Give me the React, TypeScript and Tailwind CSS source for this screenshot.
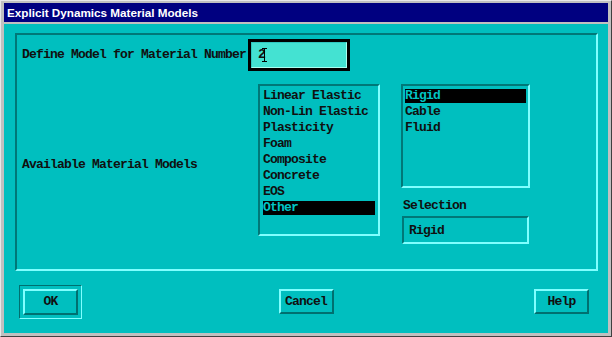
import React from "react";

const mono = { fontFamily: '"Liberation Mono", "DejaVu Sans Mono", monospace' };

function ListBox({ items, selected, className }: { items: string[]; selected: string; className: string }) {
  return (
    <div
      className={`border-2 border-t-[#007878] border-l-[#007878] border-r-[#80ffff] border-b-[#80ffff] flex flex-col gap-[2px] ${className}`}
    >
      {items.map((it) => (
        <div
          key={it}
          className={`h-[14px] leading-[14px] whitespace-pre ${it === selected ? "bg-black text-[#00c4c4]" : "text-[#101010]"}`}
        >
          {it}
        </div>
      ))}
    </div>
  );
}

function Button({ label }: { label: string }) {
  return (
    <div className="w-[55px] h-[25px] border-2 border-t-[#80ffff] border-l-[#80ffff] border-r-[#007070] border-b-[#007070] flex items-center justify-center text-[#101010]">
      {label}
    </div>
  );
}

export default function App() {
  return (
    <div
      className="w-[612px] h-[337px] bg-[#c0c0c0] border border-t-[#e8e8e8] border-l-[#e8e8e8] border-r-[#404040] border-b-[#404040] pt-[2px] pl-[3px] pr-[3px] pb-[3px] flex flex-col"
    >
      <div
        className="h-[19px] mb-[2px] bg-[#000080] text-white font-bold text-[11.7px] pl-[3px] flex items-center"
        style={{ fontFamily: '"Liberation Sans", Arial, sans-serif' }}
      >
        Explicit Dynamics Material Models
      </div>
      <div className="flex-1 bg-[#00bfbf] flex flex-col pt-[9px] pl-[11px] pr-[10px] font-bold text-[13px] tracking-[-0.8px] text-[#101010]" style={mono}>
        <div className="h-[238px] border-2 border-t-[#007878] border-l-[#007878] border-r-[#80ffff] border-b-[#80ffff] flex flex-col">
          <div className="mt-[4px] flex items-center h-[32px] pl-[5px]">
            <div className="w-[226px] whitespace-pre leading-[14px]">Define Model for Material Number</div>
            <div className="w-[102px] h-[32px] border-[3px] border-black">
              <div className="w-full h-full bg-[#44e2d2] border border-t-[#30c8c0] border-l-[#30c8c0] border-r-[#a8fff0] border-b-[#a8fff0] flex items-center pl-[6px]">
                <span className="relative inline-block h-[14px] leading-[14px]">
                  2
                  <span className="absolute left-[6px] top-[0px] w-[1px] h-[14px] bg-black" />
                  <span className="absolute left-[4px] top-[0px] w-[5px] h-[1px] bg-black" />
                  <span className="absolute left-[4px] top-[13px] w-[5px] h-[1px] bg-black" />
                </span>
              </div>
            </div>
          </div>
          <div className="mt-[13px] flex">
            <div className="w-[241px] pl-[5px] pt-[74px] leading-[14px] whitespace-pre">Available Material Models</div>
            <ListBox
              className="w-[122px] h-[152px] pt-[3px] pl-[3px] pr-[3px]"
              items={["Linear Elastic", "Non-Lin Elastic", "Plasticity", "Foam", "Composite", "Concrete", "EOS", "Other"]}
              selected="Other"
            />
            <div className="ml-[21px] w-[129px] flex flex-col">
              <ListBox
                className="w-[129px] h-[104px] pt-[3px] pl-[2px] pr-[2px]"
                items={["Rigid", "Cable", "Fluid"]}
                selected="Rigid"
              />
              <div className="mt-[11px] pl-[2px] leading-[14px]">Selection</div>
              <div className="mt-[3px] ml-[1px] w-[127px] h-[28px] border-2 border-t-[#007878] border-l-[#007878] border-r-[#80ffff] border-b-[#80ffff] flex items-center pl-[5px] pt-[2px]">
                Rigid
              </div>
            </div>
          </div>
        </div>
        <div className="mt-[14px] pl-[4px] pr-[5px] grid grid-cols-[1fr_auto_1fr] items-start">
          <div className="justify-self-start w-[63px] h-[34px] border border-t-[#007070] border-l-[#007070] border-r-[#80ffff] border-b-[#80ffff] p-[3px]">
            <div className="w-[55px] h-[26px] border-2 border-t-[#80ffff] border-l-[#80ffff] border-r-[#007070] border-b-[#007070] flex items-center justify-center">
              OK
            </div>
          </div>
          <div className="mt-[4px]">
            <Button label="Cancel" />
          </div>
          <div className="mt-[4px] justify-self-end mr-[4px]">
            <Button label="Help" />
          </div>
        </div>
      </div>
    </div>
  );
}
